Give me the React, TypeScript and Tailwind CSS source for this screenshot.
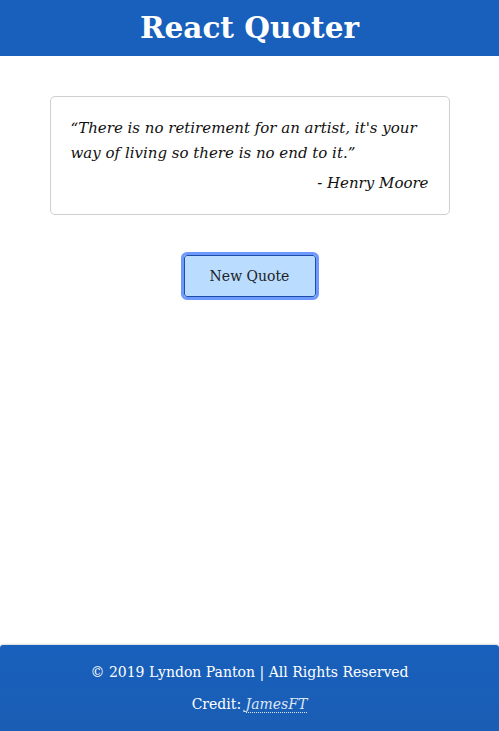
import React from "react";

export default function App() {
  return (
    <div className="min-h-[731px] flex flex-col bg-white" style={{ fontFamily: "Georgia, 'DejaVu Serif', serif" }}>
      <header className="h-[56px] bg-[#1860bb] flex items-center justify-center">
        <h1 className="text-white font-bold text-[29.5px] leading-none">React Quoter</h1>
      </header>
      <main className="flex-1 flex flex-col items-center pt-[40px]">
        <div className="w-[400px] border border-[#cfcfcf] rounded-[5px] px-[20px] pt-[19px] pb-[18px]">
          <p className="italic text-[15px] leading-[25px] text-[#111] pr-[10px]">“There is no retirement for an artist, it's your way of living so there is no end to it.”</p>
          <p className="italic text-[15px] leading-[25px] text-[#111] text-right mt-[5px]">- Henry Moore</p>
        </div>
        <button className="mt-[40px] w-[132px] h-[42px] bg-[#b9dcff] border border-[#1e4fa8] text-[14px] text-[#222] outline-[3px] outline-solid outline-[#6f98ff] outline-offset-0 rounded-[3px]">
          New Quote
        </button>
      </main>
      <footer className="h-[86px] bg-gradient-to-b from-[#1860bc] to-[#1a5db4] rounded-t-[3px] flex flex-col items-center justify-center gap-[11px] text-white text-[14px] shadow-[0_-1px_2px_rgba(0,0,0,0.15)]">
        <p>© 2019 Lyndon Panton | All Rights Reserved</p>
        <p>
          Credit: <a className="italic text-[#dde6f5] border-b border-dotted border-[#dde6f5]">JamesFT</a>
        </p>
      </footer>
    </div>
  );
}
